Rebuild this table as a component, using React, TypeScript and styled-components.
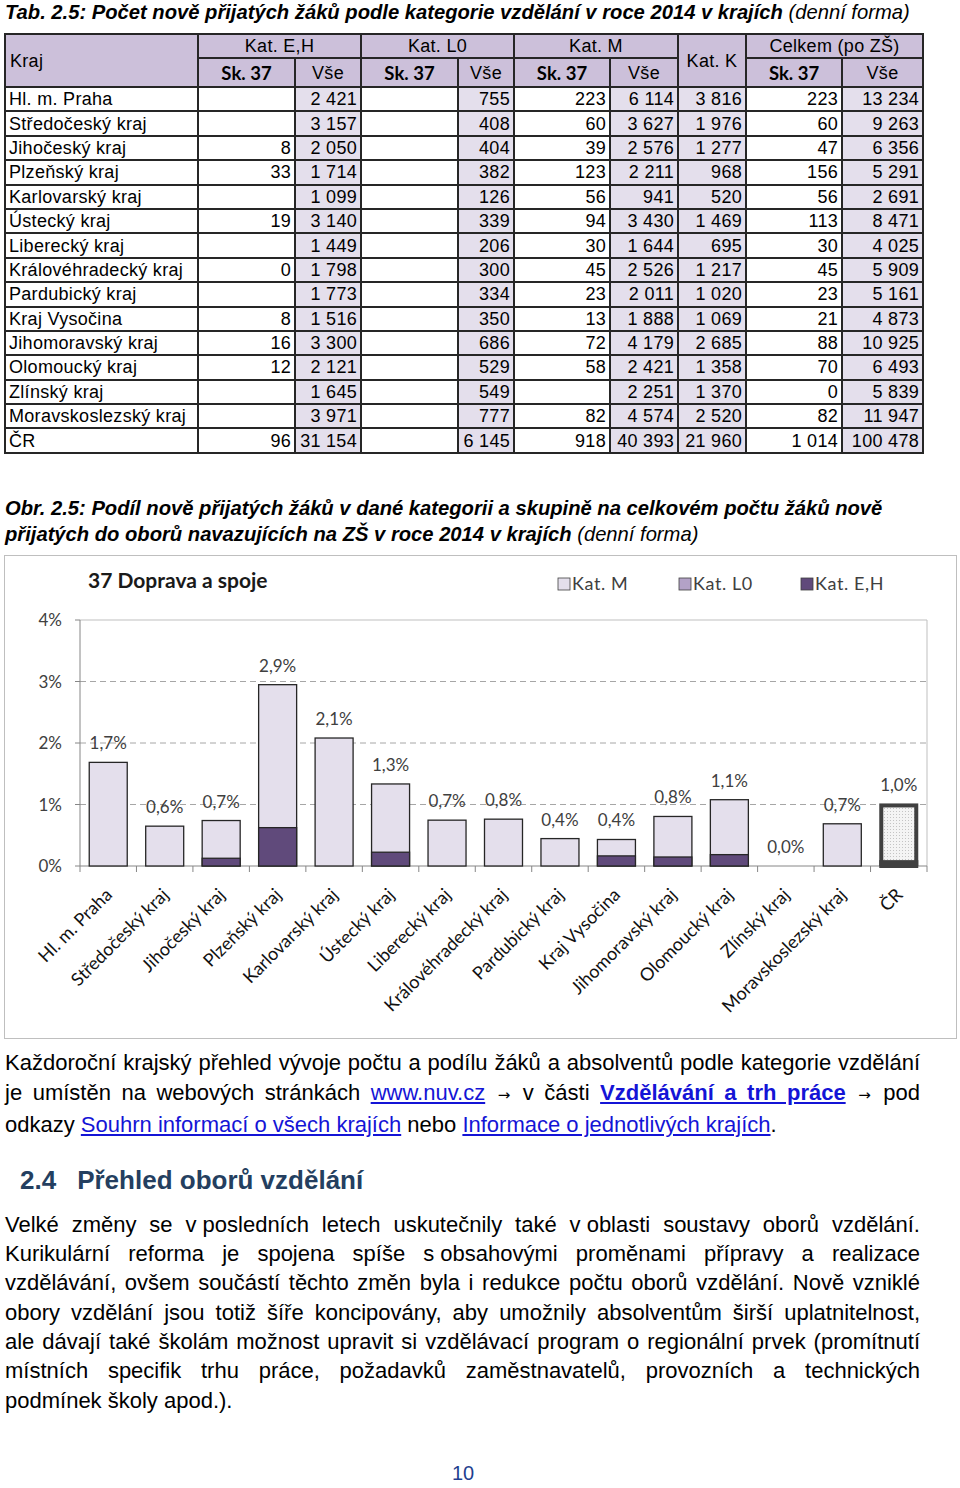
import React from "react";
import styled, { createGlobalStyle } from "styled-components";

const GlobalStyle = createGlobalStyle`
  body {
    margin: 0;
    background: #fff;
    color: #000;
    font-family: "Liberation Sans", Arial, sans-serif;
  }
`;

const rows: string[][] = [
  ["Hl. m. Praha", "", "2 421", "", "755", "223", "6 114", "3 816", "223", "13 234"],
  ["Středočeský kraj", "", "3 157", "", "408", "60", "3 627", "1 976", "60", "9 263"],
  ["Jihočeský kraj", "8", "2 050", "", "404", "39", "2 576", "1 277", "47", "6 356"],
  ["Plzeňský kraj", "33", "1 714", "", "382", "123", "2 211", "968", "156", "5 291"],
  ["Karlovarský kraj", "", "1 099", "", "126", "56", "941", "520", "56", "2 691"],
  ["Ústecký kraj", "19", "3 140", "", "339", "94", "3 430", "1 469", "113", "8 471"],
  ["Liberecký kraj", "", "1 449", "", "206", "30", "1 644", "695", "30", "4 025"],
  ["Královéhradecký kraj", "0", "1 798", "", "300", "45", "2 526", "1 217", "45", "5 909"],
  ["Pardubický kraj", "", "1 773", "", "334", "23", "2 011", "1 020", "23", "5 161"],
  ["Kraj Vysočina", "8", "1 516", "", "350", "13", "1 888", "1 069", "21", "4 873"],
  ["Jihomoravský kraj", "16", "3 300", "", "686", "72", "4 179", "2 685", "88", "10 925"],
  ["Olomoucký kraj", "12", "2 121", "", "529", "58", "2 421", "1 358", "70", "6 493"],
  ["Zlínský kraj", "", "1 645", "", "549", "", "2 251", "1 370", "0", "5 839"],
  ["Moravskoslezský kraj", "", "3 971", "", "777", "82", "4 574", "2 520", "82", "11 947"],
  ["ČR", "96", "31 154", "", "6 145", "918", "40 393", "21 960", "1 014", "100 478"],
];

const colWidths = [193, 97, 66, 97, 56, 96, 68, 68, 96, 81];
const tinted = [2, 4, 6, 7, 9];

const num = (s: string) => (s ? parseInt(s.replace(/\s/g, ""), 10) : 0);

const Page = styled.div`
  width: 960px;
  padding: 0 0 20px 0;
  box-sizing: border-box;
`;

const Caption = styled.div<{ $gap?: number }>`
  margin: ${(p) => p.$gap ?? 0}px 0 0 5px;
  font-size: 20.2px;
  line-height: 24px;
  font-style: italic;
  font-weight: 700;
  white-space: nowrap;

  span {
    font-weight: 400;
  }
`;

const CaptionLine = styled(Caption)`
  line-height: 26px;
`;

const Table = styled.table`
  margin: 9px 0 0 4px;
  width: 918px;
  table-layout: fixed;
  border-collapse: collapse;
  font-size: 18px;
  letter-spacing: 0.3px;
`;

const HeadCell = styled.th<{ $left?: boolean; $h?: number }>`
  background: #ccc0da;
  border: 2px solid #262626;
  font-weight: 400;
  height: ${(p) => p.$h ?? 22}px;
  padding: 0 4px;
  line-height: 20px;
  text-align: ${(p) => (p.$left ? "left" : "center")};
  white-space: nowrap;
`;

const SkCell = styled(HeadCell)`
  font-family: Lato, "Liberation Sans", sans-serif;
  font-weight: 700;
  font-size: 18.5px;
  letter-spacing: 0;
`;

const Cell = styled.td<{ $tint?: boolean; $left?: boolean }>`
  background: ${(p) => (p.$tint ? "#e4dfec" : "#fff")};
  border: 2px solid #262626;
  height: 22.4px;
  padding: 0 3px 0 3px;
  line-height: 20px;
  text-align: ${(p) => (p.$left ? "left" : "right")};
  white-space: nowrap;
`;

const ChartFrame = styled.div`
  margin: 8px 0 0 4px;
  width: 953px;
  height: 484px;
  border: 1px solid #bfbfbf;
  box-sizing: border-box;

  svg {
    display: block;
  }
`;

const Paragraph = styled.div<{ $gap: number; $lh: number }>`
  margin: ${(p) => p.$gap}px 0 0 5px;
  width: 915px;
  font-size: 22px;
  line-height: ${(p) => p.$lh}px;
`;

const Line = styled.span<{ $last?: boolean }>`
  display: block;
  text-align: justify;
  text-align-last: ${(p) => (p.$last ? "left" : "justify")};
  white-space: nowrap;
`;

const Tight = styled.span`
  display: inline-block;
`;

const Link = styled.a<{ $bold?: boolean }>`
  color: #1414d6;
  text-decoration: underline;
  font-weight: ${(p) => (p.$bold ? 700 : 400)};
`;

const Arrow = styled.span`
  font-family: "DejaVu Sans", sans-serif;
  font-size: 15px;
  margin: 0 2px;
`;

const Heading = styled.h2`
  margin: 25px 0 0 20px;
  font-size: 26px;
  line-height: 30px;
  font-weight: 700;
  color: #243f60;
  display: flex;
  gap: 21px;
`;

const PageNumber = styled.div`
  margin-top: 46px;
  text-align: center;
  font-size: 20px;
  line-height: 24px;
  color: #1f3f8f;
  padding-right: 34px;
`;

// chart geometry, measured inside the chart frame
const L = 75;
const R = 922;
const T = 64;
const B = 310;
const PX = (B - T) / 4;
const CW = (R - L) / 15;
const BW = 38;

const chartFont = "Lato, 'Liberation Sans', sans-serif";

const legend = [
  { x: 553, fill: "#e4dfec", label: "Kat. M" },
  { x: 674, fill: "#b3a2c7", label: "Kat. L0" },
  { x: 796, fill: "#604a7b", label: "Kat. E,H" },
];

const Chart = () => {
  const bars = rows.map((r) => {
    const total = num(r[9]);
    return {
      name: r[0],
      pct: (num(r[8]) / total) * 100,
      eh: (num(r[1]) / total) * 100,
    };
  });

  return (
    <svg width={951} height={482} viewBox="0 0 951 482">
      <defs>
        <pattern id="dots" width="3" height="3" patternUnits="userSpaceOnUse">
          <rect width="3" height="3" fill="#f4f4f4" />
          <rect width="1" height="1" fill="#c4c4c4" />
        </pattern>
      </defs>

      <text x={83} y={32} fontFamily={chartFont} fontWeight={700} fontSize={21} fill="#1a1a1a">
        37 Doprava a spoje
      </text>

      {legend.map((l) => (
        <g key={l.label}>
          <rect x={l.x} y={22} width={12} height={12} fill={l.fill} stroke="#404040" strokeWidth={0.8} />
          <text x={l.x + 14} y={34} fontFamily={chartFont} fontSize={18} letterSpacing={0.6} fill="#404040">
            {l.label}
          </text>
        </g>
      ))}

      {[1, 2, 3].map((k) => (
        <line key={k} x1={L} x2={R} y1={B - k * PX} y2={B - k * PX} stroke="#a6a6a6" strokeDasharray="6 4" />
      ))}
      <line x1={L} x2={R} y1={T} y2={T} stroke="#bfbfbf" />
      <line x1={R} x2={R} y1={T} y2={B} stroke="#bfbfbf" />
      <line x1={L} x2={L} y1={T} y2={B} stroke="#868686" />
      <line x1={L} x2={R} y1={B} y2={B} stroke="#868686" />

      {[0, 1, 2, 3, 4].map((k) => (
        <g key={k}>
          <line x1={L - 5} x2={L} y1={B - k * PX} y2={B - k * PX} stroke="#868686" />
          <text x={57} y={B - k * PX + 6} textAnchor="end" fontFamily={chartFont} fontSize={17} fill="#404040">
            {k}%
          </text>
        </g>
      ))}

      {Array.from({ length: 16 }).map((_, i) => (
        <line key={i} x1={L + CW * i} x2={L + CW * i} y1={B} y2={B + 6} stroke="#868686" />
      ))}

      {bars.map((b, i) => {
        const cx = L + CW * i + CW / 2;
        const x = cx - BW / 2;
        const top = B - b.pct * PX;
        const ehTop = B - b.eh * PX;
        const isTotal = i === bars.length - 1;
        return (
          <g key={b.name}>
            {b.pct > 0 && !isTotal && (
              <rect x={x} y={top} width={BW} height={B - top} fill="#e4dfec" stroke="#262626" strokeWidth={1.3} />
            )}
            {isTotal && (
              <rect
                x={x + 1.5}
                y={top + 1.5}
                width={BW - 3}
                height={B - top - 1.5}
                fill="url(#dots)"
                stroke="#404040"
                strokeWidth={4}
              />
            )}
            {b.eh > 0 && (
              <rect
                x={isTotal ? x - 0.5 : x}
                y={ehTop}
                width={isTotal ? BW + 1 : BW}
                height={B - ehTop}
                fill={isTotal ? "#404040" : "#604a7b"}
                stroke="#262626"
                strokeWidth={isTotal ? 0 : 1.3}
              />
            )}
            <text x={cx} y={top - 13} textAnchor="middle" fontFamily={chartFont} fontSize={17} fill="#404040">
              {b.pct.toFixed(1).replace(".", ",")}%
            </text>
            <text
              transform={`translate(${cx + 5},${340}) rotate(-45)`}
              textAnchor="end"
              fontFamily={chartFont}
              fontSize={18}
              fill="#111"
            >
              {b.name}
            </text>
          </g>
        );
      })}
    </svg>
  );
};

export default function App() {
  return (
    <Page>
      <GlobalStyle />
      <Caption>
        Tab. 2.5: Počet nově přijatých žáků podle kategorie vzdělání v roce 2014 v krajích <span>(denní forma)</span>
      </Caption>

      <Table>
        <colgroup>
          {colWidths.map((w, i) => (
            <col key={i} style={{ width: w }} />
          ))}
        </colgroup>
        <thead>
          <tr>
            <HeadCell rowSpan={2} $left>
              Kraj
            </HeadCell>
            <HeadCell colSpan={2}>Kat. E,H</HeadCell>
            <HeadCell colSpan={2}>Kat. L0</HeadCell>
            <HeadCell colSpan={2}>Kat. M</HeadCell>
            <HeadCell rowSpan={2}>Kat. K</HeadCell>
            <HeadCell colSpan={2}>Celkem (po ZŠ)</HeadCell>
          </tr>
          <tr>
            <SkCell $h={27}>Sk. 37</SkCell>
            <HeadCell $h={27}>Vše</HeadCell>
            <SkCell $h={27}>Sk. 37</SkCell>
            <HeadCell $h={27}>Vše</HeadCell>
            <SkCell $h={27}>Sk. 37</SkCell>
            <HeadCell $h={27}>Vše</HeadCell>
            <SkCell $h={27}>Sk. 37</SkCell>
            <HeadCell $h={27}>Vše</HeadCell>
          </tr>
        </thead>
        <tbody>
          {rows.map((r) => (
            <tr key={r[0]}>
              {r.map((v, i) => (
                <Cell key={i} $left={i === 0} $tint={tinted.includes(i)}>
                  {v}
                </Cell>
              ))}
            </tr>
          ))}
        </tbody>
      </Table>

      <CaptionLine $gap={41}>
        Obr. 2.5: Podíl nově přijatých žáků v dané kategorii a skupině na celkovém počtu žáků nově
      </CaptionLine>
      <CaptionLine $gap={0}>
        přijatých do oborů navazujících na ZŠ v roce 2014 v krajích <span>(denní forma)</span>
      </CaptionLine>

      <ChartFrame>
        <Chart />
      </ChartFrame>

      <Paragraph $gap={9} $lh={30}>
        <Line>Každoroční krajský přehled vývoje počtu a podílu žáků a absolventů podle kategorie vzdělání</Line>
        <Line>
          je umístěn na webových stránkách <Link href="#">www.nuv.cz</Link> <Arrow>→</Arrow> v části{" "}
          <Link href="#" $bold>
            Vzdělávání a trh práce
          </Link>{" "}
          <Arrow>→</Arrow> pod
        </Line>
        <Line $last>
          odkazy <Link href="#">Souhrn informací o všech krajích</Link> nebo{" "}
          <Link href="#">Informace o jednotlivých krajích</Link>.
        </Line>
      </Paragraph>

      <Heading>
        <span>2.4</span>
        <span>Přehled oborů vzdělání</span>
      </Heading>

      <Paragraph $gap={15} $lh={29.3}>
        <Line>
          Velké změny se <Tight>v&nbsp;posledních</Tight> letech uskutečnily také <Tight>v&nbsp;oblasti</Tight>{" "}
          soustavy oborů vzdělání.
        </Line>
        <Line>
          Kurikulární reforma je spojena spíše <Tight>s&nbsp;obsahovými</Tight> proměnami přípravy a realizace
        </Line>
        <Line>vzdělávání, ovšem součástí těchto změn byla i redukce počtu oborů vzdělání. Nově vzniklé</Line>
        <Line>obory vzdělání jsou totiž šíře koncipovány, aby umožnily absolventům širší uplatnitelnost,</Line>
        <Line>ale dávají také školám možnost upravit si vzdělávací program o regionální prvek (promítnutí</Line>
        <Line>místních specifik trhu práce, požadavků zaměstnavatelů, provozních a technických</Line>
        <Line $last>podmínek školy apod.).</Line>
      </Paragraph>

      <PageNumber>10</PageNumber>
    </Page>
  );
}
